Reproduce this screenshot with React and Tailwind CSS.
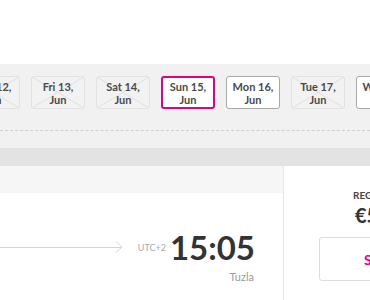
import React from "react";

const days = [
  { l1: "Thu 12,", l2: "Jun", state: "off" },
  { l1: "Fri 13,", l2: "Jun", state: "off" },
  { l1: "Sat 14,", l2: "Jun", state: "off" },
  { l1: "Sun 15,", l2: "Jun", state: "sel" },
  { l1: "Mon 16,", l2: "Jun", state: "on" },
  { l1: "Tue 17,", l2: "Jun", state: "off" },
  { l1: "Wed 18,", l2: "Jun", state: "on" },
];

function Day({ d }) {
  const base =
    "relative shrink-0 w-[54px] h-[33px] rounded-[3px] flex flex-col items-center justify-center text-[11px] leading-[13px] font-bold text-[#4a4a4a] overflow-hidden";
  let cls = "";
  if (d.state === "off") cls = "border border-[#e2e2e2] bg-[#f2f2f2]";
  if (d.state === "on") cls = "border border-[#a8a8a8] bg-white";
  if (d.state === "sel") cls = "border-2 border-[#e5007e] bg-white";
  return (
    <div className={base + " " + cls}>
      {d.state === "off" && (
        <svg className="absolute inset-0 w-full h-full" viewBox="0 0 54 33" preserveAspectRatio="none">
          <line x1="0" y1="0" x2="54" y2="33" stroke="#dedede" strokeWidth="1" />
          <line x1="54" y1="0" x2="0" y2="33" stroke="#dedede" strokeWidth="1" />
        </svg>
      )}
      <span className="relative">{d.l1}</span>
      <span className="relative">{d.l2}</span>
    </div>
  );
}

export default function App() {
  return (
    <div className="w-[370px] h-[300px] overflow-hidden bg-white" style={{ fontFamily: "Lato, 'Open Sans', sans-serif" }}>
      <div className="h-[64px] bg-white" />
      <div className="h-[84px] bg-[#f1f1f1] pt-[12px] overflow-hidden">
        <div className="flex gap-[11px] ml-[-34px]">
          {days.map((d, i) => (
            <Day key={i} d={d} />
          ))}
        </div>
        <div className="mt-[21px] border-t border-dashed border-[#cfcfcf]" />
      </div>
      <div className="h-[18px] bg-[#e3e3e3]" />
      <div className="flex h-[134px]">
        <div className="w-[284px] shrink-0 border-r border-[#e6e6e6] flex flex-col">
          <div className="h-[27px] bg-[#f6f6f6]" />
          <div className="flex items-center mt-[38px] h-[32px] pr-[28px]">
            <div className="flex-1 relative h-[12px] flex items-center">
              <div className="w-[122px] h-px bg-[#d4d4d4]" />
              <svg className="absolute left-[115px] top-0" width="8" height="12" viewBox="0 0 8 12">
                <path d="M1 0.5 L7 6 L1 11.5" fill="none" stroke="#d4d4d4" strokeWidth="1" />
              </svg>
            </div>
            <span className="text-[9px] text-[#aaa] mr-[4px] mt-[2px]">UTC+2</span>
            <span className="text-[33px] leading-[32px] font-bold text-[#333]">15:05</span>
          </div>
          <div className="mt-[6px] pr-[29px] text-right text-[11px] text-[#999]">Tuzla</div>
        </div>
        <div className="flex-1 bg-white flex flex-col">
          <div className="pl-[69px] pt-[23px] text-[10px] leading-[12px] font-bold text-[#444]">REGULAR</div>
          <div className="pl-[71px] mt-[2px] text-[20px] leading-[24px] font-bold text-[#333]">€59</div>
          <div className="ml-[35px] mt-[10px] w-[150px] h-[44px] shrink-0 border border-[#dcdcdc] rounded-[3px] flex items-center pl-[44px] text-[14px] font-bold text-[#e5007e]">
            SELECT
          </div>
        </div>
      </div>
    </div>
  );
}
